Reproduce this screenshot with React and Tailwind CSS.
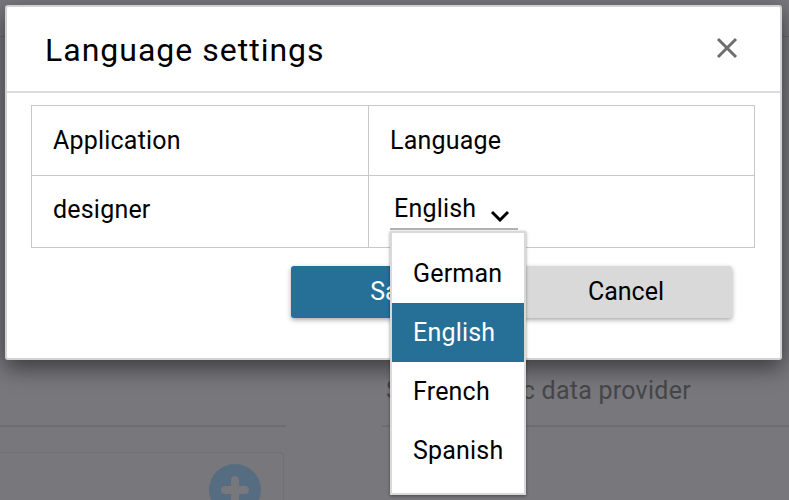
const languages = ["German", "English", "French", "Spanish"];

const App = () => {
    return (
        <div className="relative h-[500px] w-[789px] overflow-hidden bg-[#77777c] font-['Roboto',sans-serif]">
            {/* page behind the backdrop */}
            <div className="h-[37px] border-b border-[#69696e]"></div>
            <div className="flex pt-[388px]">
                <div className="w-[286px]">
                    <div className="border-b-2 border-[#6c6c71]"></div>
                    <div className="-ml-[4px] mt-[25px] flex h-[60px] w-[288px] justify-end rounded-sm border border-[#6f6f74] pr-[22px] pt-[11px]">
                        <svg width="52" height="52" viewBox="0 0 52 52">
                            <circle cx="26" cy="26" r="26" fill="#566c80" />
                            <path d="M26 16v20M16 26h20" stroke="#77777c" strokeWidth="8" strokeLinecap="round" />
                        </svg>
                    </div>
                </div>
                <div className="ml-[96px] flex-1">
                    <p className="-mt-[50px] h-[50px] pl-[4px] text-[25px] leading-[32px] tracking-[0.25px] text-[#46464a]">Select metric data provider</p>
                    <div className="border-b-2 border-[#6c6c71]"></div>
                </div>
            </div>

            {/* dialog */}
            <div className="absolute left-[5px] top-[5px] h-[355px] w-[777px] rounded-[3px] border-2 border-[#d2d2d2] bg-white shadow-[0_8px_22px_rgba(0,0,0,0.5)]">
                <div className="flex h-[86px] items-center justify-between border-b-2 border-[#dcdcdc] pl-[38px] pr-[42px]">
                    <h2 className="mt-[1px] text-[32px] font-normal tracking-[1px] text-black">Language settings</h2>
                    <svg width="22" height="22" viewBox="0 0 22 22" className="mb-[2px]">
                        <path d="M2 2l18 18M20 2L2 20" stroke="#6e6e6e" strokeWidth="3" />
                    </svg>
                </div>

                <div className="px-[24px] pt-[12px]">
                    <table className="w-[724px] table-fixed border-collapse text-[25px] text-black">
                        <tbody>
                            <tr className="h-[70px]">
                                <td className="w-[337px] border border-[#c8c8c8] pl-[21px] tracking-[0.2px]">Application</td>
                                <td className="border border-[#c8c8c8] pl-[21px] tracking-[0.2px]">Language</td>
                            </tr>
                            <tr className="h-[72px]">
                                <td className="border border-[#c8c8c8] pb-[4px] pl-[21px] tracking-[0.2px]">designer</td>
                                <td className="border border-[#c8c8c8] pl-[21px] align-top">
                                    <div className="flex h-[54px] w-[128px] items-start border-b-2 border-[#b4b4b4] pl-[4px] pt-[15px] leading-[36px]">
                                        <span className="tracking-[0.2px]">English</span>
                                        <svg width="20" height="12" viewBox="0 0 20 12" className="ml-[14px] mt-[19px]">
                                            <path d="M2 2l8 8 8-8" fill="none" stroke="#000" strokeWidth="3" />
                                        </svg>
                                    </div>
                                </td>
                            </tr>
                        </tbody>
                    </table>

                    <div className="mr-[24px] mt-[18px] flex justify-end gap-[17px] text-[25px]">
                        <button className="h-[52px] w-[212px] rounded-[3px] bg-[#266f97] text-white shadow-[0_2px_5px_rgba(0,0,0,0.35)]">Save</button>
                        <button className="h-[52px] w-[212px] rounded-[3px] bg-[#d9d9d9] text-black shadow-[0_2px_5px_rgba(0,0,0,0.35)]">Cancel</button>
                    </div>
                </div>
            </div>

            {/* open language menu */}
            <ul className="absolute left-[390px] top-[231px] w-[136px] border-2 border-[#d9d9d9] bg-white pb-[13px] pt-[11px] text-[25px] text-black shadow-[0_1px_3px_rgba(0,0,0,0.4)]">
                {languages.map((lang) => (
                    <li
                        key={lang}
                        className={lang === "English"
                            ? "flex h-[59px] items-center bg-[#266f97] pl-[21px] tracking-[0.2px] text-white"
                            : "flex h-[59px] items-center pl-[21px] tracking-[0.2px]"}
                    >
                        {lang}
                    </li>
                ))}
            </ul>
        </div>
    );
};

export default App;
